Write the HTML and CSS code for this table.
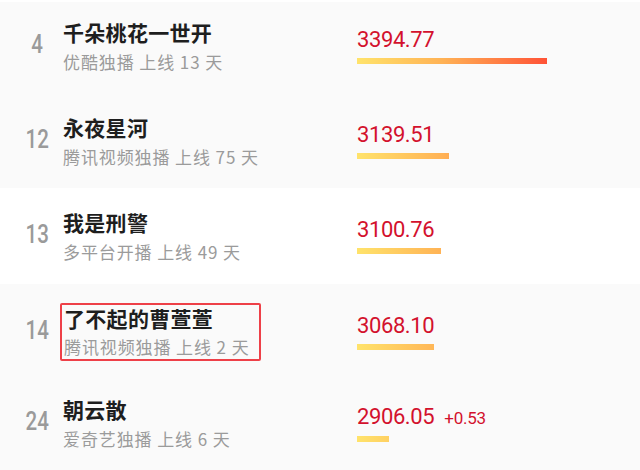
FILE: index.html
```html
<!DOCTYPE html>
<html lang="zh-CN">
<head>
<meta charset="utf-8">
<title>热度榜</title>
<link rel="stylesheet" href="styles.css">
</head>
<body>
<div class="list">
  <div class="row row-first gray">
    <div class="rank"><span>4</span></div>
    <div class="info">
      <div class="title">千朵桃花一世开</div>
      <div class="sub">优酷独播 上线 13 天</div>
    </div>
    <div class="score">
      <div class="num">3394.77</div>
      <div class="bar" style="width:190px"></div>
    </div>
  </div>
  <div class="row gray h95">
    <div class="rank"><span>12</span></div>
    <div class="info">
      <div class="title">永夜星河</div>
      <div class="sub">腾讯视频独播 上线 75 天</div>
    </div>
    <div class="score">
      <div class="num">3139.51</div>
      <div class="bar" style="width:92px"></div>
    </div>
  </div>
  <div class="row white h96">
    <div class="rank"><span>13</span></div>
    <div class="info">
      <div class="title">我是刑警</div>
      <div class="sub">多平台开播 上线 49 天</div>
    </div>
    <div class="score">
      <div class="num">3100.76</div>
      <div class="bar" style="width:84px"></div>
    </div>
  </div>
  <div class="row gray h91">
    <div class="rank"><span>14</span></div>
    <div class="info">
      <div class="marked">
        <div class="title">了不起的曹萱萱</div>
        <div class="sub">腾讯视频独播 上线 2 天</div>
      </div>
    </div>
    <div class="score">
      <div class="num">3068.10</div>
      <div class="bar" style="width:77px"></div>
    </div>
  </div>
  <div class="row gray h95">
    <div class="rank"><span>24</span></div>
    <div class="info">
      <div class="title">朝云散</div>
      <div class="sub">爱奇艺独播 上线 6 天</div>
    </div>
    <div class="score">
      <div class="num">2906.05<span class="delta">+0.53</span></div>
      <div class="bar" style="width:32px"></div>
    </div>
  </div>
</div>
</body>
</html>
```
FILE: styles.css
```css
html, body {
  margin: 0;
  padding: 0;
  background: #ffffff;
}
body {
  width: 640px;
  height: 470px;
  overflow: hidden;
  font-family: "Noto Sans", "Noto Sans CJK SC", sans-serif;
}
.list {
  display: flex;
  flex-direction: column;
  padding-top: 2px;
}
.row {
  display: flex;
  align-items: flex-start;
  box-sizing: border-box;
  padding-top: 21px;
}
.row-first {
  height: 91px;
  padding-top: 17px;
}
.h95 { height: 95px; }
.h96 { height: 96px; }
.h91 { height: 91px; }
.gray { background: #fafafa; }
.white { background: #ffffff; }

.rank {
  width: 52px;
  margin-left: 11px;
  margin-top: 11px;
  height: 30px;
  display: flex;
  justify-content: center;
  align-items: center;
}
.rank span {
  font-family: Roboto, "Noto Sans", sans-serif;
  font-size: 25px;
  font-weight: 500;
  color: #9a9a9a;
  line-height: 30px;
  display: inline-block;
  transform: scaleX(0.82);
}
.info {
  width: 294px;
  display: flex;
  flex-direction: column;
  align-items: flex-start;
}
.title {
  font-family: "Noto Sans CJK SC", sans-serif;
  font-size: 21px;
  font-weight: 700;
  line-height: 26px;
  color: #1e1e1e;
  letter-spacing: 0.3px;
}
.sub {
  font-family: "Noto Sans CJK SC", sans-serif;
  font-size: 17px;
  line-height: 24px;
  margin-top: 5px;
  color: #9b9b9b;
  letter-spacing: 0.9px;
  white-space: pre;
}
.marked {
  border: 2px solid #ee4048;
  border-radius: 2px;
  margin-left: -3px;
  margin-top: -2px;
  padding: 0 9px 0 2px;
}
.marked .sub {
  margin-top: 4px;
}
.score {
  margin-top: 7px;
  display: flex;
  flex-direction: column;
  align-items: flex-start;
}
.num {
  font-family: Roboto, "Noto Sans", sans-serif;
  font-size: 22px;
  line-height: 28px;
  color: #d3112d;
  letter-spacing: -0.4px;
  display: flex;
  align-items: baseline;
}
.delta {
  font-size: 17px;
  margin-left: 10px;
  letter-spacing: -0.2px;
}
.bar {
  height: 6px;
  margin-top: 4px;
  background-image: linear-gradient(90deg, #ffe36b 0%, #ffb255 45%, #ff5236 100%);
  background-size: 190px 100%;
  background-repeat: no-repeat;
}
```
